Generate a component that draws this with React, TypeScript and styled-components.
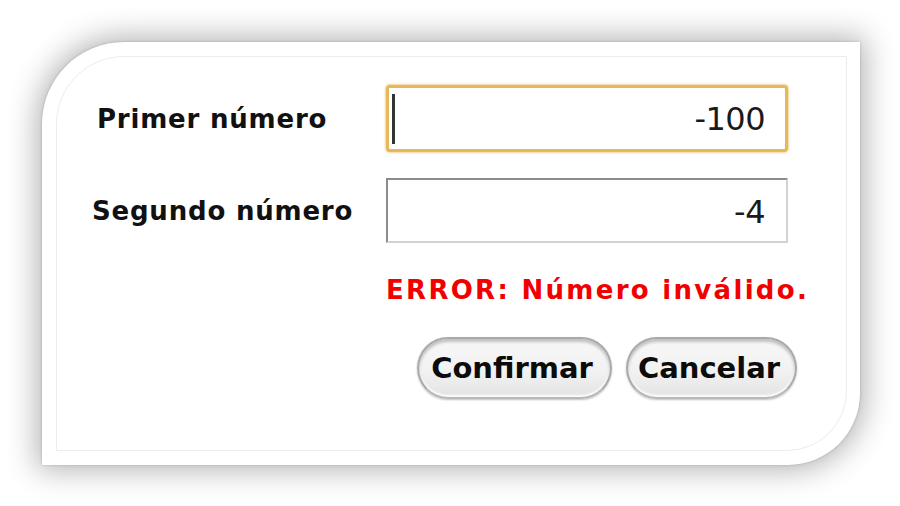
import React from "react";
import styled, { createGlobalStyle } from "styled-components";

const Global = createGlobalStyle`
  html, body { margin: 0; padding: 0; background: #ffffff; }
  body { width: 900px; height: 506px; overflow: hidden; font-family: "DejaVu Sans", "Liberation Sans", sans-serif; }
`;

const Page = styled.div`
  padding: 42px 0 0 42px;
`;

const Card = styled.div`
  width: 818px;
  height: 423px;
  box-sizing: border-box;
  background: #ffffff;
  border-radius: 82px 0 72px 0;
  box-shadow: 0 0 30px 5px rgba(0, 0, 0, 0.3), 0 0 3px rgba(0, 0, 0, 0.18);
  padding: 14px 13px 14px 14px;
`;

const Inner = styled.div`
  height: 100%;
  box-sizing: border-box;
  border: 1px solid #ececec;
  border-radius: 68px 0 60px 0;
  padding: 28px 0 0 35px;
`;

const Form = styled.div`
  display: grid;
  grid-template-columns: 294px 402px;
  row-gap: 26px;
  align-items: center;
`;

const Label = styled.div<{ $indent?: number }>`
  font-weight: bold;
  font-size: 26px;
  letter-spacing: 0.8px;
  color: #111;
  padding-left: ${(p) => p.$indent ?? 0}px;
  white-space: nowrap;
`;

const Field = styled.div<{ $focused?: boolean }>`
  box-sizing: border-box;
  height: ${(p) => (p.$focused ? 67 : 65)}px;
  display: flex;
  align-items: center;
  justify-content: space-between;
  padding: ${(p) => (p.$focused ? "0 20px 0 3px" : "3px 21px 0 4px")};
  background: #fff;
  border-radius: ${(p) => (p.$focused ? "4px" : "0")};
  border: ${(p) => (p.$focused ? "3px solid #e6b75c" : "2px solid #d2d2d2")};
  border-top-color: ${(p) => (p.$focused ? "#e6b75c" : "#8c8c8c")};
  border-left-color: ${(p) => (p.$focused ? "#e6b75c" : "#8c8c8c")};
  box-shadow: ${(p) => (p.$focused ? "0 0 2px 1px rgba(240, 196, 110, 0.7)" : "none")};
`;

const Caret = styled.span<{ $show?: boolean }>`
  width: 3px;
  height: 50px;
  background: ${(p) => (p.$show ? "#333" : "transparent")};
`;

const Value = styled.span`
  font-family: "DejaVu Sans", Verdana, sans-serif;
  font-size: 32px;
  color: #1a1a1a;
  letter-spacing: -0.5px;
`;

const ErrorText = styled.div`
  grid-column: 2;
  margin-top: 6px;
  font-weight: bold;
  font-size: 26px;
  line-height: 30px;
  letter-spacing: 2.3px;
  color: #f20000;
  white-space: nowrap;
`;

const Buttons = styled.div`
  grid-column: 2;
  display: flex;
  gap: 14px;
  margin-top: 6px;
  padding-left: 31px;
`;

const Pill = styled.div<{ $w: number }>`
  box-sizing: border-box;
  flex: 0 0 auto;
  width: ${(p) => p.$w}px;
  height: 62px;
  border-radius: 31px;
  border: 2px solid #a9a9a9;
  border-bottom-color: #b8b8b8;
  background: linear-gradient(#f7f7f7 0%, #f2f2f2 55%, #e3e3e3 100%);
  box-shadow: inset 0 3px 3px rgba(0, 0, 0, 0.22), inset 0 -2px 2px rgba(255, 255, 255, 0.9), 0 1px 2px rgba(0, 0, 0, 0.25);
  display: flex;
  align-items: center;
  justify-content: center;
  font-weight: bold;
  font-size: 29px;
  color: #0c0c0c;
  padding-bottom: 1px;
  padding-right: 5px;
  white-space: nowrap;
`;

export default function App() {
  return (
    <>
      <Global />
      <Page>
        <Card>
          <Inner>
            <Form>
              <Label $indent={5}>Primer número</Label>
              <Field $focused>
                <Caret $show />
                <Value>-100</Value>
              </Field>
              <Label>Segundo número</Label>
              <Field>
                <Caret />
                <Value>-4</Value>
              </Field>
              <ErrorText>ERROR: Número inválido.</ErrorText>
              <Buttons>
                <Pill $w={195}>Confirmar</Pill>
                <Pill $w={171}>Cancelar</Pill>
              </Buttons>
            </Form>
          </Inner>
        </Card>
      </Page>
    </>
  );
}
